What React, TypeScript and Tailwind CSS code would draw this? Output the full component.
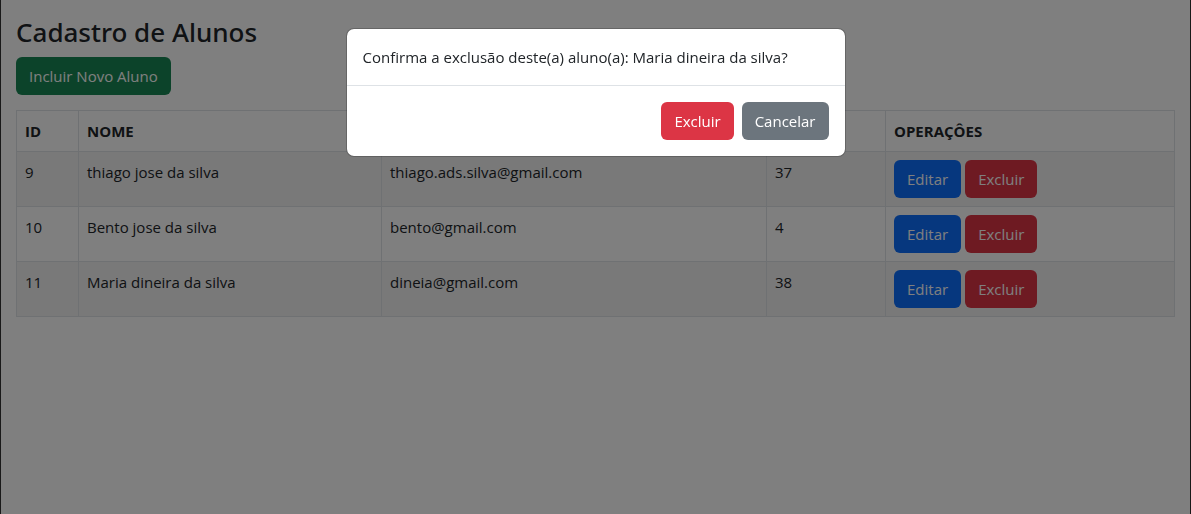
import { useState } from "react";

type Aluno = { id: number; nome: string; email: string; idade: number };

const alunosIniciais: Aluno[] = [
  { id: 9, nome: "thiago jose da silva", email: "thiago.ads.silva@gmail.com", idade: 37 },
  { id: 10, nome: "Bento jose da silva", email: "bento@gmail.com", idade: 4 },
  { id: 11, nome: "Maria dineira da silva", email: "dineia@gmail.com", idade: 38 },
];

const btn = "rounded-md px-[13px] py-[7px] leading-6 text-white";
const cell = "border border-[#dee2e6] p-2";

export default function App() {
  const [alunos, setAlunos] = useState(alunosIniciais);
  const [selecionado, setSelecionado] = useState<Aluno | null>(alunosIniciais[2]);

  const excluir = () => {
    setAlunos(alunos.filter((a) => a.id !== selecionado?.id));
    setSelecionado(null);
  };

  return (
    <div className="min-h-screen border-x border-[#333333] bg-white font-['Segoe_UI','Open_Sans',sans-serif] text-[15px] leading-6 text-[#212529]">
      <main className="pt-4 pr-4 pl-[15px]">
        <h1 className="mb-2 font-['Segoe_UI','Noto_Sans',sans-serif] text-[26px] leading-[33px] font-medium">
          Cadastro de Alunos
        </h1>
        <button type="button" className={`${btn} block bg-[#198754]`}>
          Incluir Novo Aluno
        </button>
        <table className="mt-[15px] w-full table-fixed border-collapse">
          <colgroup>
            <col className="w-[62px]" />
            <col className="w-[303px]" />
            <col className="w-[385px]" />
            <col className="w-[119px]" />
            <col className="w-[289px]" />
          </colgroup>
          <thead>
            <tr className="text-left">
              <th className={cell}>ID</th>
              <th className={cell}>NOME</th>
              <th className={cell}>EMAIL</th>
              <th className={cell}>IDADE</th>
              <th className={cell}>OPERAÇÔES</th>
            </tr>
          </thead>
          <tbody>
            {alunos.map((a) => (
              <tr key={a.id} className="align-top odd:bg-[#f2f2f2]">
                <td className={cell}>{a.id}</td>
                <td className={cell}>{a.nome}</td>
                <td className={cell}>{a.email}</td>
                <td className={cell}>{a.idade}</td>
                <td className={cell}>
                  <div className="flex gap-1">
                    <button type="button" className={`${btn} bg-[#0d6efd]`}>
                      Editar
                    </button>
                    <button type="button" className={`${btn} bg-[#dc3545]`} onClick={() => setSelecionado(a)}>
                      Excluir
                    </button>
                  </div>
                </td>
              </tr>
            ))}
          </tbody>
        </table>
      </main>

      {selecionado && (
        <div className="fixed inset-0 bg-black/50 px-4 pt-7">
          <div
            role="dialog"
            aria-modal="true"
            aria-labelledby="confirmacao"
            className="mx-auto max-w-[500px] rounded-lg border border-black/20 bg-white bg-clip-padding"
          >
            <p id="confirmacao" className="p-4">
              Confirma a exclusão deste(a) aluno(a): {selecionado.nome}?
            </p>
            <div className="flex justify-end gap-2 border-t border-[#dee2e6] p-4">
              <button type="button" className={`${btn} bg-[#dc3545]`} onClick={excluir}>
                Excluir
              </button>
              <button type="button" className={`${btn} bg-[#6c757d]`} onClick={() => setSelecionado(null)}>
                Cancelar
              </button>
            </div>
          </div>
        </div>
      )}
    </div>
  );
}
